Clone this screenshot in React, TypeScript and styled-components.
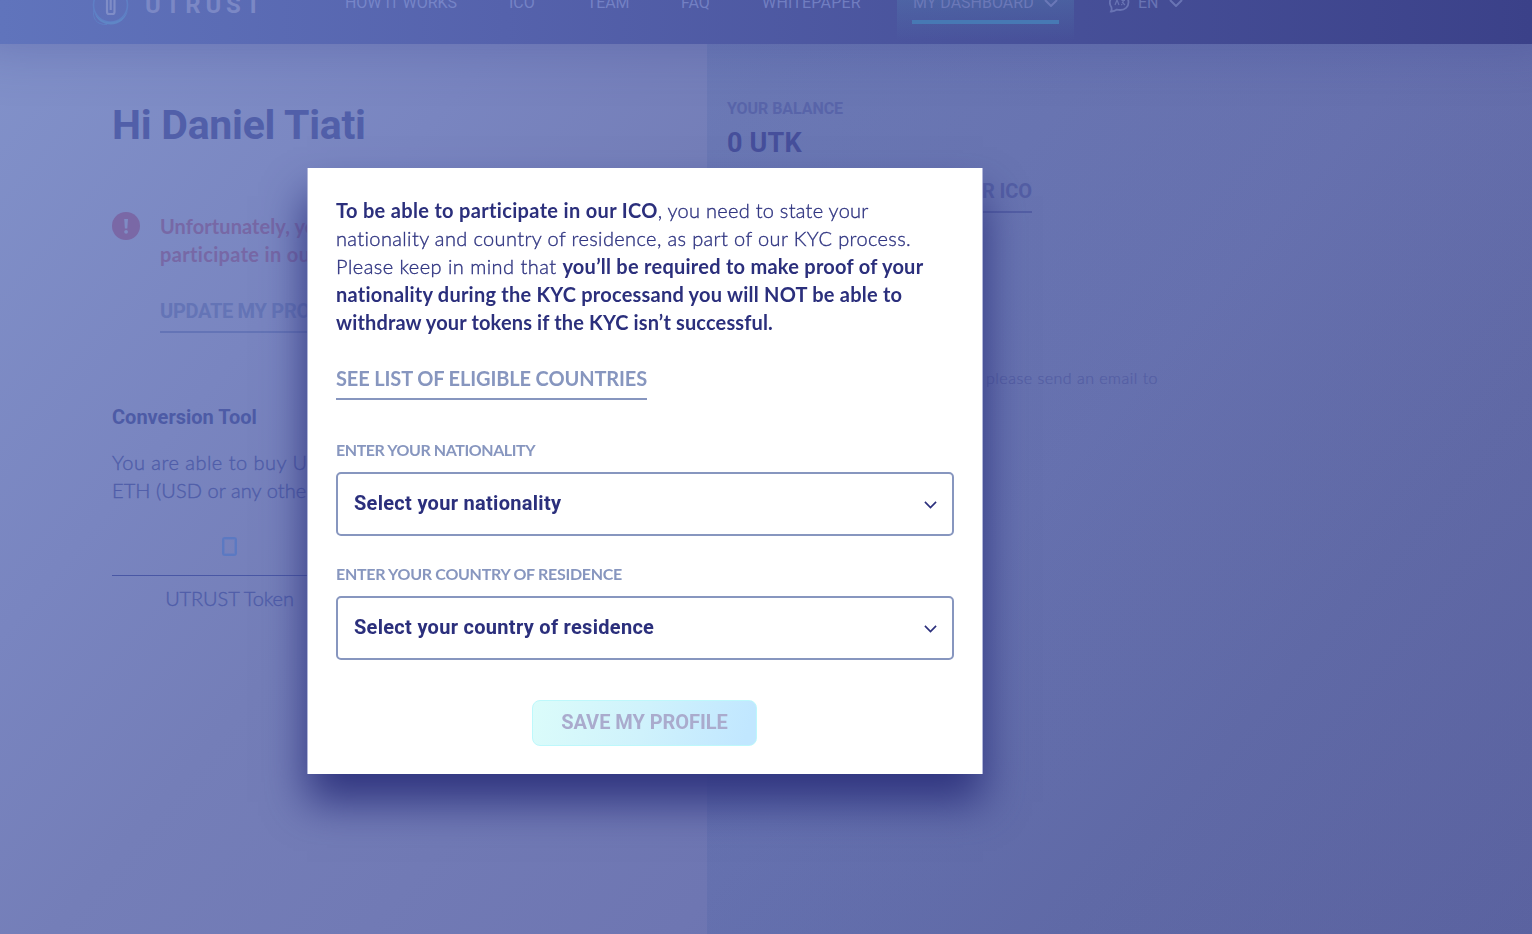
import React from "react";
import styled, { createGlobalStyle, css } from "styled-components";

const GlobalStyle = createGlobalStyle`
  *, *::before, *::after { box-sizing: border-box; }
  body { margin: 0; overflow: hidden; }
  p, h1, h2 { margin: 0; }
`;

const body = css`
  font-family: Lato, "Liberation Sans", sans-serif;
`;
const display = css`
  font-family: Roboto, "Liberation Sans", sans-serif;
`;

const Screen = styled.div`
  ${display}
  width: 100%;
  height: 934px;
  display: flex;
  flex-direction: column;
  overflow: hidden;
  background: linear-gradient(130deg, #8292ca 0%, #7985c0 23%, #747eb8 36%, #6e76b2 63%, #676ea9 80%, #6167a3 100%);
`;

/* ---------- header ---------- */

const Header = styled.header`
  flex: none;
  height: 44px;
  display: flex;
  align-items: flex-end;
  background: linear-gradient(90deg, #6074bc 0%, #5562ac 33%, #4a549d 60%, #3b4189 100%);
  box-shadow: 0 -30px 56px 30px rgba(58, 64, 140, 0.36);
`;

const Bar = styled.div`
  height: 84px;
  display: flex;
  align-items: center;
  padding-left: 92px;
`;

const Brand = styled.div`
  width: 220px;
  display: flex;
  align-items: center;
  gap: 15px;
  padding-top: 6px;
  color: #7b88c5;
`;

const BrandName = styled.span`
  font-size: 24px;
  line-height: 28px;
  font-weight: 700;
  letter-spacing: 4.8px;
`;

const Nav = styled.nav`
  display: flex;
  align-items: center;
  padding-left: 33px;
`;

const NavItem = styled.a<{ $width: number; $ls?: number }>`
  width: ${(p) => p.$width}px;
  flex: none;
  padding-top: 2px;
  font-size: 16px;
  line-height: 20px;
  letter-spacing: ${(p) => p.$ls ?? 0}px;
  color: rgba(150, 165, 225, 0.5);
  white-space: nowrap;
`;

const Dashboard = styled.a`
  width: 177px;
  height: 84px;
  margin-right: 35px;
  padding: 32px 15px 0;
  color: #6b78b8;
  background: linear-gradient(180deg, rgba(88, 145, 185, 0.34) 30%, rgba(88, 145, 185, 0) 96%);
`;

const DashboardLabel = styled.span`
  display: flex;
  justify-content: space-between;
  align-items: center;
  height: 32px;
  padding: 0 1px 6px;
  border-bottom: 4px solid #4779b4;
  font-size: 16px;
  line-height: 20px;
  white-space: nowrap;
`;

const Language = styled.a`
  display: flex;
  align-items: center;
  padding-top: 2px;
  font-size: 16px;
  line-height: 20px;
  color: #6974b4;
  span { margin: 0 10px 0 8px; }
`;

/* ---------- dashboard ---------- */

const Columns = styled.main`
  flex: 1;
  display: flex;
`;

const Main = styled.section`
  width: 707px;
  flex: none;
  padding: 57px 0 0 112px;
`;

const Side = styled.section`
  flex: 1;
  padding: 55px 0 0 20px;
  background: linear-gradient(90deg, rgba(20, 65, 145, 0.1), rgba(20, 50, 130, 0.085));
`;

const Greeting = styled.h1`
  font-size: 41px;
  line-height: 48px;
  font-weight: 700;
  letter-spacing: -0.25px;
  color: #515fa9;
`;

const Alert = styled.div`
  display: flex;
  gap: 20px;
  margin-top: 63px;
`;

const AlertIcon = styled.svg`
  flex: none;
  width: 28px;
  height: 28px;
`;

const AlertText = styled.p`
  ${body}
  font-size: 20px;
  line-height: 28px;
  font-weight: 700;
  color: #7768a6;
  white-space: nowrap;
`;

const FadedLink = styled.a<{ $width: number; $tone: string; $align?: string; $ls?: number }>`
  display: block;
  width: ${(p) => p.$width}px;
  height: 36px;
  font-size: 20px;
  line-height: 28px;
  font-weight: 700;
  letter-spacing: ${(p) => p.$ls ?? 0}px;
  text-align: ${(p) => p.$align ?? "left"};
  white-space: nowrap;
  color: ${(p) => p.$tone};
  border-bottom: 2px solid ${(p) => p.$tone};
`;

const AlertBody = styled.div`
  display: flex;
  flex-direction: column;
  gap: 29px;
`;

const SectionTitle = styled.h2`
  margin-top: 70px;
  font-size: 20px;
  line-height: 28px;
  font-weight: 700;
  color: #4d5ba6;
`;

const Copy = styled.p`
  ${body}
  margin-top: 17px;
  font-size: 20px;
  line-height: 28px;
  font-weight: 300;
  color: #4f5da9;
  -webkit-text-stroke: 0.35px currentColor;
  white-space: nowrap;
`;

const Line = styled.span<{ $ls: number }>`
  display: block;
  letter-spacing: ${(p) => p.$ls}px;
`;

const Converter = styled.div`
  width: 235px;
  margin-top: 33px;
  display: flex;
  flex-direction: column;
  align-items: center;
`;

const Amount = styled.div`
  width: 15px;
  height: 19px;
  border: 2px solid #5b79c2;
  border-radius: 3px;
  box-shadow: inset 0 0 0 1px rgba(91, 121, 194, 0.4);
`;

const Rule = styled.div`
  align-self: flex-start;
  width: 260px;
  height: 1px;
  margin: 19px 0 8px;
  background: #4957a5;
`;

const Unit = styled.span`
  ${body}
  font-size: 20px;
  line-height: 28px;
  font-weight: 300;
  letter-spacing: -0.1px;
  color: #4f5da9;
  -webkit-text-stroke: 0.35px currentColor;
`;

const BalanceLabel = styled.div`
  font-size: 16px;
  line-height: 20px;
  font-weight: 700;
  letter-spacing: -0.06px;
  color: #5864a9;
`;

const Balance = styled.div`
  margin: 7px 0 17px;
  font-size: 27px;
  line-height: 34px;
  font-weight: 700;
  letter-spacing: 0.2px;
  color: #464f9b;
`;

const Support = styled.p`
  ${body}
  width: 431px;
  margin-top: 155px;
  font-size: 16px;
  line-height: 20px;
  font-weight: 300;
  letter-spacing: 0.49px;
  text-align: right;
  color: #535da3;
  -webkit-text-stroke: 0.2px currentColor;
  white-space: nowrap;
`;

/* ---------- dialog ---------- */

const Scrim = styled.div`
  ${display}
  position: fixed;
  inset: 0;
  padding: 168px 0 0 307px;
`;

const Dialog = styled.div`
  width: 676px;
  height: 606px;
  padding: 28px 29px 28px 28px;
  display: flex;
  flex-direction: column;
  align-items: flex-start;
  background: #fff;
  border: solid #b1b6d9;
  border-width: 0 1px;
  box-shadow: 0 28px 40px #30357f;
`;

const Intro = styled.p`
  ${body}
  font-size: 20px;
  line-height: 28px;
  font-weight: 300;
  color: #2f3480;
  white-space: nowrap;
`;

const Light = styled.span<{ $ls: number }>`
  letter-spacing: ${(p) => p.$ls}px;
  -webkit-text-stroke: 0.35px currentColor;
`;

const Strong = styled.strong<{ $ls: number }>`
  font-weight: 700;
  letter-spacing: ${(p) => p.$ls}px;
  color: #2b2f7c;
`;

const CountriesLink = styled.a`
  ${body}
  height: 36px;
  margin: 28px 0 40px;
  font-size: 20px;
  line-height: 28px;
  font-weight: 700;
  letter-spacing: -0.134px;
  color: #8796bf;
  border-bottom: 2px solid #8796bf;
  white-space: nowrap;
`;

const FieldLabel = styled.label<{ $ls: number }>`
  ${body}
  font-size: 16px;
  line-height: 20px;
  font-weight: 700;
  letter-spacing: ${(p) => p.$ls}px;
  color: #8796bf;
`;

const Select = styled.div`
  width: 618px;
  height: 64px;
  margin: 12px 0 28px;
  padding: 0 15px 0 16px;
  display: flex;
  align-items: center;
  justify-content: space-between;
  border: 2px solid #8796bf;
  border-radius: 5px;
  font-size: 20px;
  line-height: 28px;
  font-weight: 700;
  letter-spacing: 0.29px;
  color: #2b2f7c;
  span { margin-bottom: 2px; }
  svg { margin-top: 2px; }
`;

const SaveButton = styled.button`
  ${display}
  align-self: center;
  width: 225px;
  height: 46px;
  margin-top: 12px;
  padding: 0 0 2px;
  border: 1px solid #bdf8fb;
  border-radius: 8px;
  background: linear-gradient(105deg, #dbfcfa 0%, #cff2fc 50%, #c1e7ff 95%);
  font-size: 20px;
  font-weight: 700;
  letter-spacing: -0.05px;
  color: #aaabcd;
`;

function Chevron({ width = 14, stroke = 2 }: { width?: number; stroke?: number }) {
  return (
    <svg width={width} height={width / 2 + 1} viewBox="0 0 14 8" fill="none">
      <path d="M1 1l6 6 6-6" stroke="currentColor" strokeWidth={stroke} />
    </svg>
  );
}

function Logo() {
  return (
    <svg width="38" height="42" viewBox="0 0 38 42" fill="none">
      <circle cx="18.500" cy="21" r="17" stroke="#5f7fc5" strokeWidth="1.600" />
      <path d="M2 27c2 6 8 11 16 11s15-4 18-12c-2 9-9 14.500-17 14.500S4 36 2 27z" fill="#5f86c6" />
      <path d="M2 25c-2 9 2 16 13 15.500" stroke="#5f7fc5" strokeWidth="1" />
      <path d="M15 13v15c0 1.500.7 2 2 2h3.500c1.500 0 2-.6 2-2V14M18.700 12v14" stroke="#7f8dc7" strokeWidth="2.200" />
    </svg>
  );
}

function ChatIcon() {
  return (
    <svg width="21" height="20" viewBox="0 0 21 20" fill="none" stroke="currentColor" strokeWidth="1.800">
      <path d="M2 18.500c.8-1.500.8-3 .3-4.500A8.200 8.200 0 0 1 11 1.500c5 0 8.500 3.400 8.500 7.800S16 17 11 17c-1 0-2-.1-3-.4-1.800 1.300-3.800 2-6 1.900z" />
      <path d="M6 12l2-5 2 5M12.500 7.500h3.500M14.300 6v2c0 2-.8 3-2 4M13 9l3 3" strokeWidth="1.200" />
    </svg>
  );
}

export default function App() {
  return (
    <>
      <GlobalStyle />
      <Screen>
        <Header>
          <Bar>
            <Brand>
              <Logo />
              <BrandName>UTRUST</BrandName>
            </Brand>
            <Nav>
              <NavItem $width={164} $ls={-0.05}>HOW IT WORKS</NavItem>
              <NavItem $width={78}>ICO</NavItem>
              <NavItem $width={94} $ls={-0.2}>TEAM</NavItem>
              <NavItem $width={81}>FAQ</NavItem>
              <NavItem $width={135} $ls={0.2}>WHITEPAPER</NavItem>
              <Dashboard>
                <DashboardLabel>
                  MY DASHBOARD
                  <Chevron />
                </DashboardLabel>
              </Dashboard>
              <Language>
                <ChatIcon />
                <span>EN</span>
                <Chevron />
              </Language>
            </Nav>
          </Bar>
        </Header>
        <Columns>
          <Main>
            <Greeting>Hi Daniel Tiati</Greeting>
            <Alert>
              <AlertIcon viewBox="0 0 28 28">
                <circle cx="14" cy="14" r="14" fill="#7a68a6" />
                <path d="M12.200 7h3.800l-.7 9.500h-2.400z" fill="#7f8bc4" />
                <circle cx="14.100" cy="19.800" r="1.900" fill="#7f8bc4" />
              </AlertIcon>
              <AlertBody>
                <AlertText>
                  <Line $ls={0.07}>Unfortunately, you</Line>
                  <Line $ls={0.34}>participate in our</Line>
                </AlertText>
                <FadedLink $width={170} $tone="#6474b6" $ls={-0.3}>
                  UPDATE MY PROFILE
                </FadedLink>
              </AlertBody>
            </Alert>
            <SectionTitle>Conversion Tool</SectionTitle>
            <Copy>
              <Line $ls={0.48}>You are able to buy UTK</Line>
              <Line $ls={0.08}>ETH (USD or any other</Line>
            </Copy>
            <Converter>
              <Amount />
              <Rule />
              <Unit>UTRUST Token</Unit>
            </Converter>
          </Main>
          <Side>
            <BalanceLabel>YOUR BALANCE</BalanceLabel>
            <Balance>0 UTK</Balance>
            <FadedLink $width={305} $tone="#535ea4" $align="right" $ls={-0.1}>
              PARTICIPATE IN OUR ICO
            </FadedLink>
            <Support>For support, please send an email to</Support>
          </Side>
        </Columns>
      </Screen>
      <Scrim>
        <Dialog>
          <Intro>
            <Strong $ls={0.326}>To be able to participate in our ICO</Strong>
            <Light $ls={0.27}>, you need to state your</Light>
            <br />
            <Light $ls={0.37}>nationality and country of residence, as part of our KYC process.</Light>
            <br />
            <Light $ls={0.45}>Please keep in mind that </Light>
            <Strong $ls={0.255}>you’ll be required to make proof of your</Strong>
            <br />
            <Strong $ls={0.225}>nationality during the KYC processand you will NOT be able to</Strong>
            <br />
            <Strong $ls={0.142}>withdraw your tokens if the KYC isn’t successful.</Strong>
          </Intro>
          <CountriesLink>SEE LIST OF ELIGIBLE COUNTRIES</CountriesLink>
          <FieldLabel $ls={-0.43}>ENTER YOUR NATIONALITY</FieldLabel>
          <Select>
            <span>Select your nationality</span>
            <Chevron width={13} stroke={1.8} />
          </Select>
          <FieldLabel $ls={-0.29}>ENTER YOUR COUNTRY OF RESIDENCE</FieldLabel>
          <Select>
            <span>Select your country of residence</span>
            <Chevron width={13} stroke={1.8} />
          </Select>
          <SaveButton>SAVE MY PROFILE</SaveButton>
        </Dialog>
      </Scrim>
    </>
  );
}
